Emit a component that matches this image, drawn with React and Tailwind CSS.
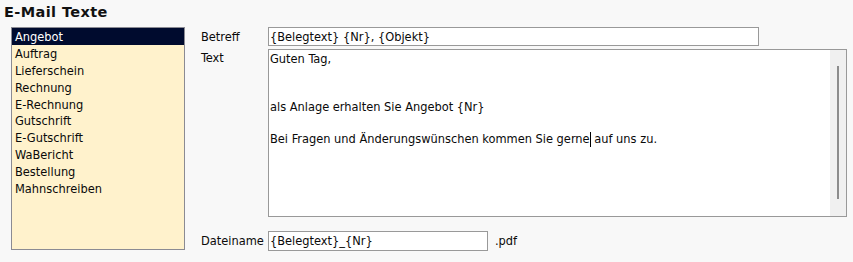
import React from "react";

const items = [
  "Angebot",
  "Auftrag",
  "Lieferschein",
  "Rechnung",
  "E-Rechnung",
  "Gutschrift",
  "E-Gutschrift",
  "WaBericht",
  "Bestellung",
  "Mahnschreiben",
];

export default function App() {
  return (
    <div
      className="w-[853px] h-[262px] bg-[#f8f8f8] text-[12.7px] text-[#0a0a0a] overflow-hidden"
      style={{ fontFamily: '"DejaVu Sans Condensed", "DejaVu Sans", sans-serif' }}
    >
      <div
        className="pl-[4px] pt-[4px] h-[27px] text-[14.5px] tracking-[0.4px] font-bold leading-[17px] text-[#111]"
        style={{ fontFamily: '"DejaVu Sans", sans-serif' }}
      >
        E-Mail Texte
      </div>
      <div className="flex">
        <div className="ml-[11px] w-[174px] h-[223px] border border-[#8b8b93] bg-[#fff2cc]">
          {items.map((it, i) => (
            <div
              key={it}
              className={
                "h-[16.9px] leading-[17px] pl-[3px] " +
                (i === 0 ? "bg-[#000b2e] text-white" : "")
              }
            >
              {it}
            </div>
          ))}
        </div>
        <div className="ml-[16px] flex flex-col">
          <div className="flex items-center h-[19px]">
            <div className="w-[67px]">Betreff</div>
            <div className="w-[491px] h-[19px] border border-[#999] bg-white pl-[1px] leading-[17px]">
              {"{Belegtext} {Nr}, {Objekt}"}
            </div>
          </div>
          <div className="flex mt-[3px]">
            <div className="w-[67px] leading-[16px] pt-[1px]">Text</div>
            <div className="w-[579px] h-[168px] border border-[#999] bg-white flex">
              <div className="flex-1 pl-[1px] pt-[1px] leading-[16px]">
                <div>Guten Tag,</div>
                <div>&nbsp;</div>
                <div>&nbsp;</div>
                <div>als Anlage erhalten Sie Angebot {"{Nr}"}</div>
                <div>&nbsp;</div>
                <div className="flex items-center">
                  <span>Bei Fragen und Änderungswünschen kommen Sie gerne</span>
                  <span className="inline-block w-px h-[15px] bg-black" />
                  <span>&nbsp;auf uns zu.</span>
                </div>
              </div>
              <div className="w-[16px] h-full bg-[#f0f0f0] flex justify-center pt-[16px]">
                <div className="w-[2px] h-[133px] bg-[#8c8c8c]" />
              </div>
            </div>
          </div>
          <div className="flex items-center mt-[14px] h-[20px]">
            <div className="w-[67px]">Dateiname</div>
            <div className="w-[220px] h-[20px] border border-[#999] bg-white pl-[1px] leading-[18px]">
              {"{Belegtext}_{Nr}"}
            </div>
            <div className="ml-[7px]">.pdf</div>
          </div>
        </div>
      </div>
    </div>
  );
}
